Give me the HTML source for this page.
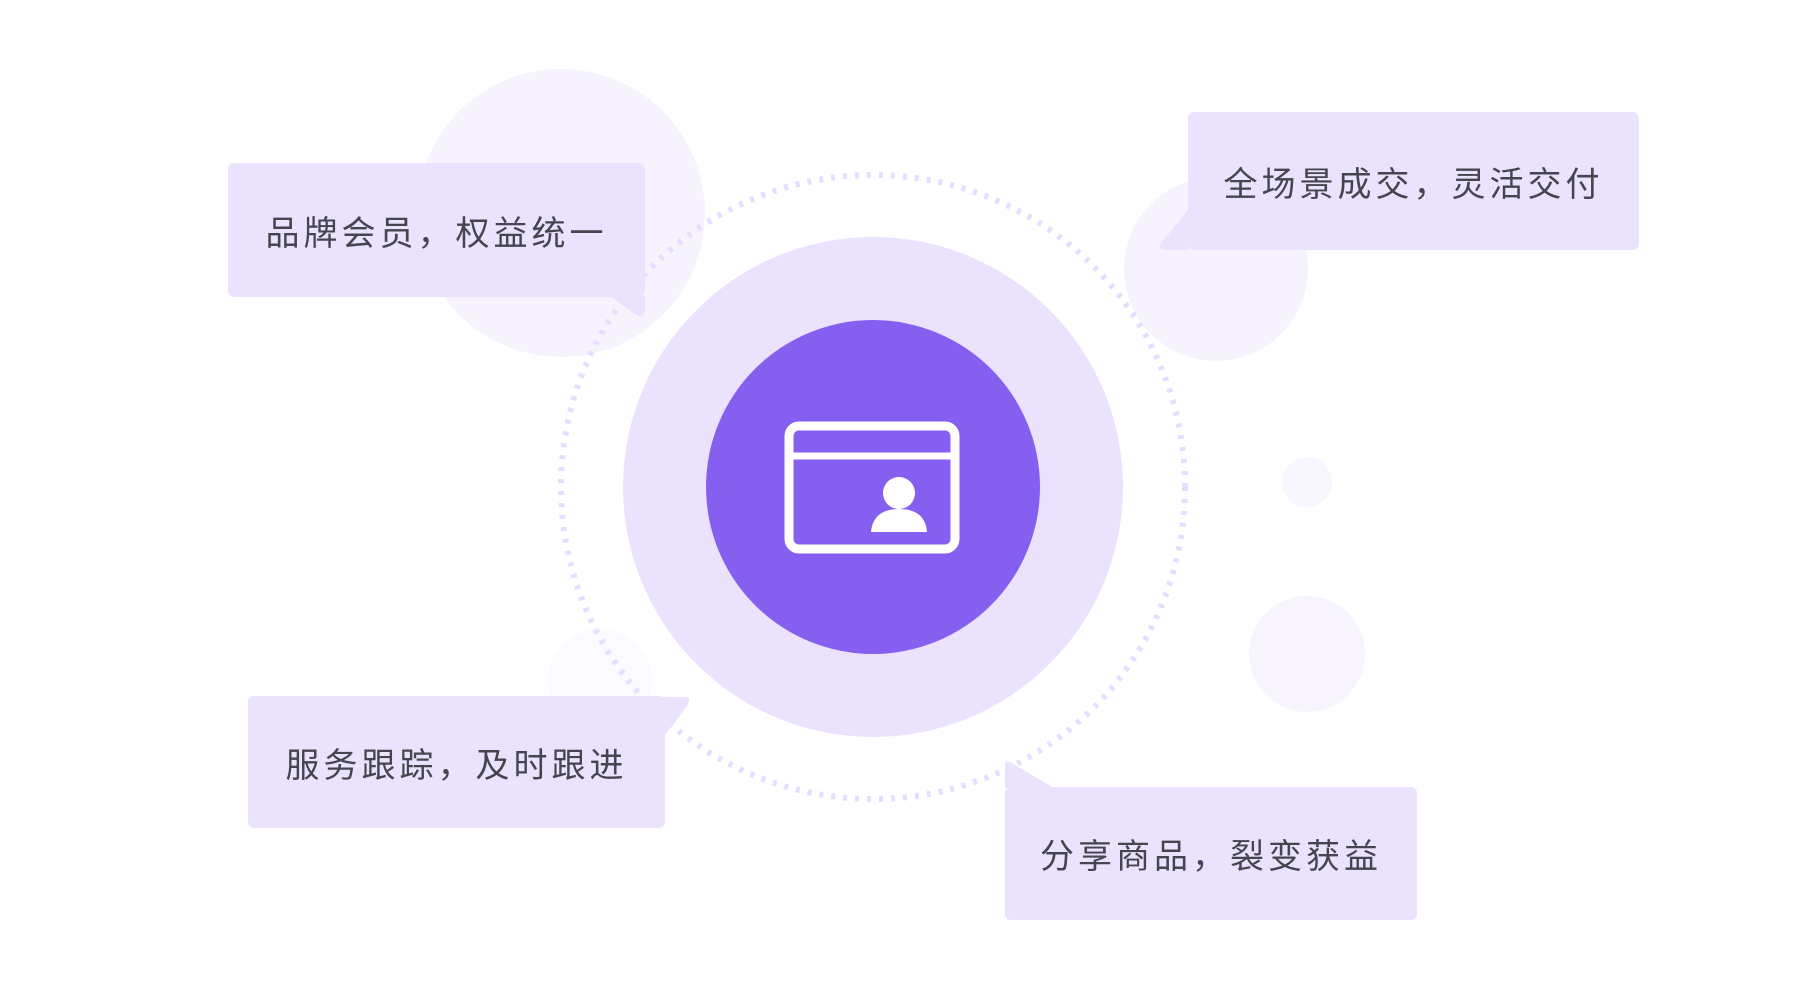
<!DOCTYPE html>
<html><head><meta charset="utf-8"><style>
html,body{margin:0;padding:0;background:#fff;width:1800px;height:992px;overflow:hidden;font-family:"Liberation Sans","Noto Sans CJK SC",sans-serif}
.c{position:absolute;border-radius:50%}
.b{position:absolute;background:#ebe3fe;border-radius:6px;color:#45454f;font-size:34px;display:flex;align-items:center;justify-content:center;letter-spacing:4px}
</style></head><body>
<div class="c" style="left:417px;top:69px;width:288px;height:288px;background:#f6f3ff"></div>
<div class="c" style="left:1124px;top:177px;width:184px;height:184px;background:#f6f3ff"></div>
<div class="c" style="left:1282px;top:457px;width:50px;height:50px;background:#f8f6ff"></div>
<div class="c" style="left:1249px;top:596px;width:116px;height:116px;background:#f7f4ff"></div>
<div class="c" style="left:548px;top:629px;width:104px;height:104px;background:#fafaff"></div>
<svg style="position:absolute;left:0;top:0" width="1800" height="992">
<circle cx="873" cy="487" r="312" fill="none" stroke="#e6ddff" stroke-width="6" stroke-dasharray="4 8"/>
<circle cx="873" cy="487" r="250" fill="#ebe3fe"/>
<circle cx="873" cy="487" r="167" fill="#8560f0"/>
<rect x="789" y="426" width="166" height="123" rx="10" fill="none" stroke="#fff" stroke-width="9"/>
<line x1="789" y1="456" x2="955" y2="456" stroke="#fff" stroke-width="7"/>
<circle cx="899" cy="493" r="16" fill="#fff"/>
<path d="M871 532 Q873 509 899 509 Q925 509 927 532 Z" fill="#fff"/>
<path d="M610 296 L645 296 L645 312 Q643 320 635 314 Z" fill="#ebe3fe"/>
<path d="M1188 210 L1188 250 L1164 250 Q1157 248 1162 242 Z" fill="#ebe3fe"/>
<path d="M640 697 L688 697 Q691 700 687 706 L665 735 Z" fill="#ebe3fe"/>
<path d="M1005 788 L1054 788 L1010 762 Q1004 760 1005 768 Z" fill="#ebe3fe"/>
</svg>
<div class="b" style="left:228px;top:163px;width:417px;height:134px">品牌会员，权益统一</div>
<div class="b" style="left:1188px;top:112px;width:451px;height:138px">全场景成交，灵活交付</div>
<div class="b" style="left:248px;top:696px;width:417px;height:132px">服务跟踪，及时跟进</div>
<div class="b" style="left:1005px;top:787px;width:412px;height:133px">分享商品，裂变获益</div>
</body></html>
